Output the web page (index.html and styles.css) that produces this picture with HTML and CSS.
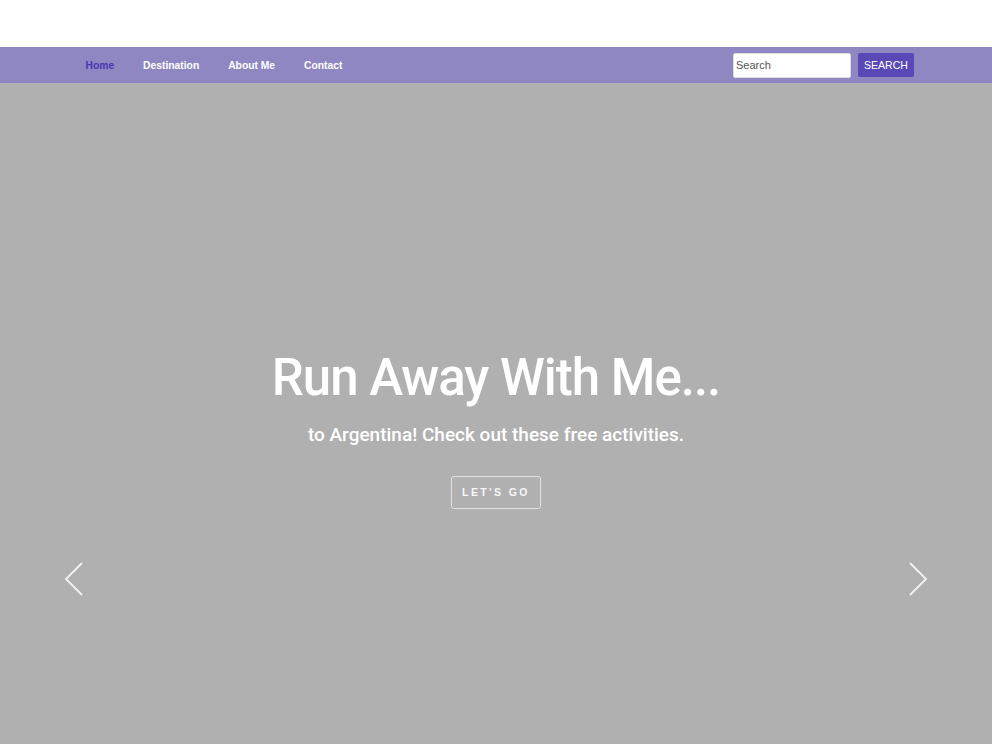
FILE: index.html
```html
<!DOCTYPE html>
<html lang="en">
<head>
    <meta charset="UTF-8">
    <meta name="viewport" content="width=device-width, initial-scale=1.0">
    <title>Run Away With Me</title>
    <link rel="stylesheet" href="styles.css">
</head>
<body>
    <div class="top-space"></div>

    <nav class="navbar">
        <ul class="nav-links">
            <li><a href="#" class="active">Home</a></li>
            <li><a href="#">Destination</a></li>
            <li><a href="#">About Me</a></li>
            <li><a href="#">Contact</a></li>
        </ul>
        <form class="search">
            <input type="text" placeholder="Search">
            <button type="button">SEARCH</button>
        </form>
    </nav>

    <section class="hero">
        <div class="caption">
            <h1>Run Away With Me...</h1>
            <p>to Argentina! Check out these free activities.</p>
            <a href="#" class="btn-go">LET'S GO</a>
        </div>

        <a href="#" class="arrow prev">
            <svg width="20" height="36" viewBox="0 0 20 36"><path d="M18 2 L2 18 L18 34" fill="none" stroke="#f2f2f2" stroke-width="1.8"/></svg>
        </a>
        <a href="#" class="arrow next">
            <svg width="20" height="36" viewBox="0 0 20 36"><path d="M2 2 L18 18 L2 34" fill="none" stroke="#f2f2f2" stroke-width="1.8"/></svg>
        </a>
    </section>
</body>
</html>
```

FILE: styles.css
```css
body {
    margin: 0;
    padding: 0;
    font-family: "Liberation Sans", Arial, sans-serif;
    background-color: #fff;
}

.top-space {
    height: 47px;
}

.navbar {
    display: flex;
    align-items: center;
    justify-content: space-between;
    height: 36px;
    padding: 0 78px 0 71px;
    background-color: #8e87c2;
}

.nav-links {
    display: flex;
    list-style: none;
    margin: 0;
    padding: 0;
}

.nav-links a {
    display: block;
    padding: 0 14.5px;
    font-size: 10.3px;
    font-weight: bold;
    color: #fff;
    text-decoration: none;
}

.nav-links a.active {
    color: #4836b0;
}

.search {
    display: flex;
    align-items: center;
    gap: 7px;
}

.search input {
    box-sizing: border-box;
    width: 118px;
    height: 25px;
    padding: 0 2px;
    border: 1px solid #ddd;
    border-radius: 2px;
    font-family: "Liberation Sans", Arial, sans-serif;
    font-size: 11px;
    color: #333;
}

.search input::placeholder {
    color: #555;
}

.search button {
    width: 56px;
    height: 24px;
    padding: 0;
    border: none;
    border-radius: 2px;
    background-color: #5a48b6;
    color: #fff;
    font-family: "Liberation Sans", Arial, sans-serif;
    font-size: 10.5px;
}

.hero {
    position: relative;
    height: 994px;
    background-color: #b0b0b0;
    color: #fff;
}

.caption {
    padding-top: 263px;
    text-align: center;
    font-family: Roboto, "Liberation Sans", sans-serif;
}

.caption h1 {
    margin: 0;
    font-size: 51px;
    font-weight: 500;
    letter-spacing: -1px;
    line-height: 64px;
}

.caption p {
    margin: 13px 0 0;
    font-size: 19px;
    font-weight: 500;
}

.btn-go {
    display: inline-block;
    margin-top: 30px;
    width: 88px;
    height: 31px;
    line-height: 31px;
    border: 1px solid #e2e2e2;
    border-radius: 3px;
    color: #f7f7f7;
    text-decoration: none;
    font-family: "Liberation Sans", Arial, sans-serif;
    font-size: 10.5px;
    font-weight: bold;
    letter-spacing: 2.4px;
}

.arrow {
    position: absolute;
    top: 478px;
}

.arrow.prev {
    left: 64px;
}

.arrow.next {
    right: 64px;
}
```
